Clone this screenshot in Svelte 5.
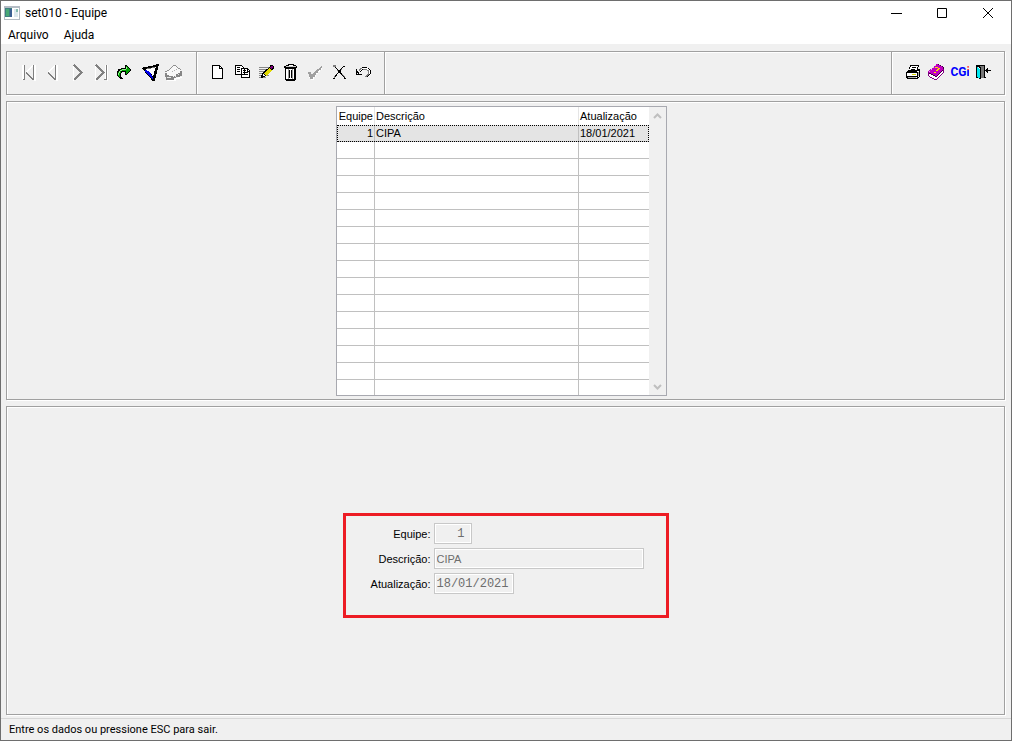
<script>
  const navigation = [
    { id: "first", label: "Primeiro", disabled: true },
    { id: "prev", label: "Anterior", disabled: true },
    { id: "next", label: "Próximo", disabled: true },
    { id: "last", label: "Último", disabled: true },
    { id: "goto", label: "Ir para" },
    { id: "filter", label: "Filtrar" },
    { id: "clear", label: "Limpar filtro", disabled: true },
  ];

  const editing = [
    { id: "new", label: "Novo" },
    { id: "copy", label: "Copiar" },
    { id: "edit", label: "Alterar" },
    { id: "trash", label: "Excluir" },
    { id: "confirm", label: "Confirmar", disabled: true },
    { id: "cancel", label: "Cancelar" },
    { id: "undo", label: "Desfazer" },
  ];

  const system = [
    { id: "print", label: "Imprimir" },
    { id: "help", label: "Ajuda" },
    { id: "cgi", label: "CGi" },
    { id: "exit", label: "Sair" },
  ];

  const rows = [{ equipe: 1, descricao: "CIPA", atualizacao: "18/01/2021" }];
  const blankRows = Array(15);

  let selected = $state(0);
  let current = $derived(rows[selected]);
</script>

{#snippet icon(id)}
  <svg width="24" height="24" viewBox="0 0 24 24" fill="none" shape-rendering="crispEdges" aria-hidden="true">
    {#if id === "first"}
      <path stroke="#fff" stroke-width="2" d="M10 12.5l7-7M18.5 5v16M6.5 5v15" />
      <path stroke="#808080" stroke-width="1.7" d="M10 12.5l7.5 7.5" />
      <path stroke="#808080" d="M8.5 5v15M7 19.5h2M17.5 5v15" />
    {:else if id === "prev"}
      <path stroke="#fff" stroke-width="2" d="M8 12.5l7-7M16.5 5v16" />
      <path stroke="#808080" stroke-width="1.7" d="M8 12.5l7.5 7.5" />
      <path stroke="#808080" d="M15.5 5v15" />
    {:else if id === "next"}
      <path stroke="#fff" d="M9.5 5v16M10.5 20.5l8-8" />
      <path stroke="#808080" stroke-width="1.7" d="M10 5l7.5 7.5-7.5 7.5" />
    {:else if id === "last"}
      <path stroke="#fff" d="M7.5 5v16M8.5 20.5l8-8M17.5 5v15M19.5 5v16" />
      <path stroke="#808080" stroke-width="1.7" d="M8 5l7.5 7.5-7.5 7.5" />
      <path stroke="#808080" d="M18.5 5v15M16 19.5h3" />
    {:else if id === "goto"}
      <path fill="#000" d="M13 5h2v1h1v1h1v1h1v1h1v2h-1v1h-1v1h-1v1h-1v1h-2v-3h-3v1h-1v4h1v1h1v1H8v-1H7v-1H6v-1H5v-5h1v-2h1V9h2V8h4z" />
      <path fill="#00a000" d="M14 6v3H9v1H8v1H7v1H6v4h1v1h1v-4h1v-2h5v3h1v-1h1v-1h1v-1h1V9h-1V8h-1V7h-1V6z" />
      <path fill="#90f090" d="M7 11h1v2H7zM8 10h2v1H8zM10 9h4v1h-4zM14 7h1v2h-1zM6 13h1v2H6z" />
    {:else if id === "filter"}
      <path fill="#000" d="M6 8h1V7h5V6h5V5h3V4h3v2h-1v4h-1v4h-1v4h-1v3h-3v-1h-1v-2h-1v-1h-1v-1h-1v-1h-1v-1h-1v-1h-1v-1H9v-1H8v-1H7v-1H6z" />
      <path fill="#fff" d="M9 9h5V8h5V7h1v1h-1v3h-1v4h-1v-2h-1v-1h-1v-1h-1v-1h-4z" />
      <path fill="#fff" d="M11 9h7v2h-1v5h-1v-2h-1v-1h-1v-1h-1v-1h-2z" />
      <path fill="#0000e8" d="M9 10h2v1h2v1h1v1h1v2h1v2h1v2h-1v-1h-1v-1h-1v-1h-1v-1h-1v-1h-1v-1h-1v-1H9z" />
      <path fill="#777" d="M11 8h4v1h-4zM16 7h3v1h-3z" />
    {:else if id === "clear"}
      <path fill="#f8f8f8" d="M5 13l4-4 5-4 7 5v4l-7 5H6z" />
      <path fill="#fff" d="M7 19h8v-1h3v-1h4v1h-2v1h-4v2H7z" />
      <path fill="#909090" d="M5 11h2v1H5zM7 10h2v1H7zM9 9h1v1H9zM10 8h1v1h-1zM11 7h1v1h-1zM12 6h1v1h-1zM13 5h3v1h-3zM16 6h1v1h-1zM17 7h1v1h-1zM18 8h2v1h-2zM20 9h1v1h-1z" />
      <path fill="#b0b0b0" d="M12 11h1v1h-1zM14 10h1v1h-1zM16 9h1v1h-1z" />
      <path fill="#858585" d="M5 13h2v2h2v1h4v1h1v-1h2v-2h2v-1h2v-2h2v5h-2v1h-4v1h-2v2H6v-3H5z" />
      <path stroke="#e8e8e8" d="M7 17.5h4M15 16.5h1M18 14.5h1" />
    {:else if id === "new"}
      <path fill="#fff" stroke="#000" d="M6.5 5.5h7l3 3v10h-10z" />
      <path stroke="#000" d="M13.5 5.5v3h3M16.5 8v11" />
    {:else if id === "copy"}
      <path fill="#fff" stroke="#000" d="M5.5 5.5h6l3 3v6h-9zM11.5 8.5h6l2 2v7h-8z" />
      <path stroke="#000" d="M7 7.5h3M7 9.5h3M7 11.5h3M13 10.5h3M13 12.5h5M13 14.5h5M17.5 8v3h2" />
    {:else if id === "edit"}
      <path stroke="#888" d="M5 7.5h10M5 9.5h10M5 11.5h8M5 13.5h10M5 15.5h10M5 17.5h7" />
      <path fill="#000" d="M16 5h3v1h1v3h-1v1h-1v1h-1v1h-1v1h-1v1h-1v1h-1v1h-2v1H9v1H7v-3h1v-2h1v-1h1v-1h1v-1h1v-1h1V9h1V8h1V7h1z" />
      <path fill="#e0d800" d="M14 9h1V8h1v1h1v1h1v1h-1v1h-1v1h-1v1h-1v1h-1v1h-1v-1h-1v-1h-1v-1h1v-1h1v-1h1v-1h1z" />
      <path fill="#800080" d="M17 6h2v2h-1v1h-1V8h-1V7h1z" />
      <path fill="#fff" d="M9 14h1v1h1v1H9z" />
    {:else if id === "trash"}
      <path fill="#000" d="M10 4h6v1h2v1h1v2h-1v12h-1v1H8v-1H7V8H6V6h2V5h2z" />
      <path fill="#fff" d="M11 5h4v1h-4zM8 9h9v10H8z" />
      <path fill="#ccc" d="M8 6h10v1H8z" />
      <path stroke="#999" d="M10.5 9v10M14.5 9v10" />
      <path stroke="#000" d="M11.5 10v8M13.5 10v8M16.5 9v11M7 8.5h11" />
    {:else if id === "confirm"}
      <path fill="#fff" d="M7 14h3v1h1v-1h1v-1h2v-2h2V9h2V7h2v3h-2v2h-2v2h-2v3h-2v3H9v-2H7z" />
      <path fill="#a0a0a0" d="M6 12h3v2h2v-1h1v-1h1v-1h1v-1h1V9h2V8h1V7h1V6h1v2h-1v2h-2v1h-1v2h-2v2h-1v2h-2v2H8v-2H7v-3H6z" />
    {:else if id === "cancel"}
      <path stroke="#808080" d="M7 5.5h3M7 6.5h2l3 4M17.5 6.5l-6 7-4 5M15 13.5l4 4" />
      <path stroke="#000" d="M9.5 7.5l9 10 1 1M19.5 5.5l-3 2-5 6-3 4" />
      <path fill="#000" d="M12 11h3v2h-3zM7 18h2v1H7zM18 18h2v1h-2z" />
    {:else if id === "undo"}
      <path stroke="#fff" stroke-width="2" d="M10 12l3-3h4l3 3v2l-3 3" />
      <path stroke="#000" d="M6.5 9v6M6 14.5h6M7 11.5l2 2M9.5 12.5l3-3M12 7.5h5M17.5 8.5h1l2 2v3l-2 2h-1M18 16.5h-3" />
      <path stroke="#808080" d="M9 10.5l2-2h1M13 9.5h4M17.5 10l1 1v3l-2 2h-2" />
    {:else if id === "print"}
      <path fill="#fff" stroke="#000" d="M10.5 5.5h8l-2 6h-8zM6.5 12.5l2-2h9l2-1v7l-2 2h-10l-1-2z" />
      <path fill="#fff" d="M11 6h6l-1 4H9z" />
      <path stroke="#000" d="M12 7.5h4M11 9.5h4M7 12.5h10M17.5 12v6M7 16.5h11M8 18.5h9" />
      <path fill="#fff" d="M7 13h10v3H7z" />
      <path fill="#d8d800" d="M12 14h4v1h-4z" />
      <path stroke="#aaa" d="M8 17.5h8M18.5 12v4" />
    {:else if id === "help"}
      <path fill="#c000c0" d="M12 4h2v1h2v1h2v1h2v2h-1v1h-1v1h-1v1h-1v1h-1v1h-1v1h-1v1h-2v-1H9v-1H7v-1H5v-1H4v-1h1v-1h1v-1h1V9h1V8h1V7h1V6h1V5h1z" />
      <path fill="#fff" d="M5 14h2v1h2v1h2v1h2v-1h1v-1h1v-1h1v-1h1v-1h1v-1h1v-1h1v2l-7 7h-2l-6-3z" />
      <path stroke="#800080" d="M4.5 12v4M5 16.5h1M6 17.5h2M8 18.5h2M10 19.5h3M13 18.5h1M14 17.5h1M15 16.5h1M16 15.5h1M17 14.5h1M18 13.5h1M19 12.5h1M19.5 9v3" />
      <path stroke="#400040" d="M14 4.5h1M16 5.5h1M18 6.5h1M19.5 7v2M18 10.5h1M17 11.5h1M16 12.5h1M15 13.5h1M14 14.5h1M13 15.5h1M11 16.5h2M9 15.5h2M7 14.5h2M5 13.5h2" />
      <path fill="#f0a0f0" d="M5 11h1v1H5zM7 9h1v1H7zM9 7h1v1H9zM11 5h1v1h-1z" />
      <path stroke="#ffe000" d="M11 7.5h3M14 8.5h2M13 9.5h2M12 10.5h2M10 12.5h2" />
    {:else if id === "exit"}
      <path stroke="#000" d="M4 5.5h9M4.5 5v13M4 17.5h3M12.5 5v13M12 17.5h2" />
      <path fill="#777" d="M8 6h4v12H8z" />
      <path fill="#00e8f0" d="M5 7h1v1h1v1h1v9H6v-1H5z" />
      <path stroke="#000" d="M5 6.5h2v1h1v11h-1M14 10.5h5" />
      <path fill="#000" d="M13 10h1V9h1V8h1v5h-1v-1h-1v-1h-1z" />
    {/if}
  </svg>
{/snippet}

{#snippet group(buttons, name)}
  <div class="group {name}" role="group">
    {#each buttons as button (button.id)}
      <button type="button" class="tool" disabled={button.disabled} aria-label={button.label}>
        {#if button.id === "cgi"}
          <span class="cgi">CG<span class="dot">i</span></span>
        {:else}
          {@render icon(button.id)}
        {/if}
      </button>
    {/each}
  </div>
{/snippet}

<div class="window">
  <header class="titlebar">
    <svg width="16" height="14" viewBox="0 0 16 14" shape-rendering="crispEdges" aria-hidden="true">
      <path fill="#b4bcc4" d="M0 0h16v14H0z" />
      <path fill="#fff" d="M1 2h14v11H1z" />
      <path fill="#3e7f80" d="M1 2h7v9H1z" />
      <path fill="#47a875" d="M2 3h3v7H2z" />
      <path fill="#3c5f92" d="M6 3h2v8H6z" />
      <path fill="#dce8ee" d="M10 3h4v8h-4z" />
      <path fill="#86bcb0" d="M12 3h2v3h-2z" />
    </svg>
    <h1>set010 - Equipe</h1>
    <div class="controls">
      <button type="button" aria-label="Minimizar">
        <svg width="12" height="12" viewBox="0 0 12 12"><path stroke="#000" d="M1 6.5h11" /></svg>
      </button>
      <button type="button" aria-label="Maximizar">
        <svg width="12" height="12" viewBox="0 0 12 12"><path fill="none" stroke="#000" d="M1.5 1.5h9v9h-9z" /></svg>
      </button>
      <button type="button" aria-label="Fechar">
        <svg width="12" height="12" viewBox="0 0 12 12"><path stroke="#000" d="M1 1l10 10M11 1L1 11" /></svg>
      </button>
    </div>
  </header>

  <nav class="menu">
    <button type="button">Arquivo</button>
    <button type="button">Ajuda</button>
  </nav>

  <main>
    <div class="toolbar etched" role="toolbar">
      {@render group(navigation, "navigation")}
      {@render group(editing, "editing")}
      {@render group(system, "system")}
    </div>

    <section class="browse etched">
      <div class="grid">
        <div class="viewport">
          <table>
            <colgroup>
              <col class="col-equipe" />
              <col />
              <col class="col-data" />
            </colgroup>
            <thead>
              <tr><th>Equipe</th><th>Descrição</th><th>Atualização</th></tr>
            </thead>
            <tbody>
              {#each rows as row, i}
                <tr class:selected={i === selected} onclick={() => (selected = i)}>
                  <td class="number">{row.equipe}</td>
                  <td>{row.descricao}</td>
                  <td>{row.atualizacao}</td>
                </tr>
              {/each}
              {#each blankRows as _}
                <tr><td></td><td></td><td></td></tr>
              {/each}
            </tbody>
          </table>
        </div>
        <div class="scrollbar">
          <button type="button" disabled aria-label="Rolar para cima">
            <svg width="9" height="6" viewBox="0 0 9 6"><path fill="none" stroke="#bfbfbf" stroke-width="2" d="M1 5l3.5-3.5L8 5" /></svg>
          </button>
          <button type="button" disabled aria-label="Rolar para baixo">
            <svg width="9" height="6" viewBox="0 0 9 6"><path fill="none" stroke="#bfbfbf" stroke-width="2" d="M1 1l3.5 3.5L8 1" /></svg>
          </button>
        </div>
      </div>
    </section>

    <section class="detail etched">
      <form>
        <label for="equipe">Equipe:</label>
        <input id="equipe" class="mono code" value={current.equipe} disabled />
        <label for="descricao">Descrição:</label>
        <input id="descricao" class="text" value={current.descricao} disabled />
        <label for="atualizacao">Atualização:</label>
        <input id="atualizacao" class="mono date" value={current.atualizacao} disabled />
      </form>
    </section>
  </main>

  <footer>Entre os dados ou pressione ESC para sair.</footer>
</div>

<style>
  :global(body) {
    margin: 0;
  }

  .window {
    --face: #f0f0f0;
    --shadow: #a0a0a0;
    --line: #c0c0c0;

    box-sizing: border-box;
    display: flex;
    flex-direction: column;
    min-height: 100vh;
    border: 1px solid #6e6e6e;
    background: var(--face);
    color: #000;
    font: 11px/16px "Liberation Sans", Arial, sans-serif;
  }

  button {
    display: flex;
    align-items: center;
    justify-content: center;
    margin: 0;
    padding: 0;
    border: 0;
    background: none;
    color: inherit;
    font: inherit;
  }

  svg {
    display: block;
  }

  .titlebar {
    display: flex;
    align-items: center;
    height: 24px;
    padding-left: 3px;
    background: #fff;
  }

  h1 {
    margin: 0 auto 0 5px;
    font: 12px/16px Roboto, "Open Sans", sans-serif;
  }

  .controls {
    display: flex;
    align-self: stretch;
  }

  .controls button {
    width: 46px;
  }

  .menu {
    display: flex;
    gap: 15px;
    padding: 2px 0 1px 7px;
    background: #fff;
    font: 12px/16px Roboto, "Open Sans", sans-serif;
  }

  main {
    flex: 1;
    display: flex;
    flex-direction: column;
    gap: 6px;
    padding: 7px 6px 3px 5px;
  }

  .etched {
    border: 1px solid var(--shadow);
    box-shadow: 1px 1px 0 #fff, inset 1px 1px 0 #fff;
  }

  .toolbar {
    display: flex;
  }

  .group {
    display: flex;
    padding: 8px 10px 10px 9px;
    border-right: 1px solid var(--shadow);
    box-shadow: 1px 0 0 #fff;
  }

  .navigation {
    padding-right: 12px;
  }

  .system {
    margin-left: auto;
    padding-inline: 8px;
    border-right: 0;
    border-left: 1px solid var(--shadow);
    box-shadow: inset 1px 0 0 #fff;
  }

  .tool {
    width: 24px;
    height: 24px;
  }

  .cgi {
    color: #00f;
    font: bold 12px/24px Roboto, "Liberation Sans", sans-serif;
  }

  .dot {
    background: linear-gradient(#f33 35%, #00f 35%);
    background-clip: text;
    color: transparent;
  }

  .browse {
    display: flex;
    justify-content: center;
    padding: 4px 8px 3px 0;
  }

  .grid {
    display: flex;
    height: 288px;
    border: 1px solid #a8a9b0;
    background: #fff;
  }

  .viewport {
    overflow: hidden;
  }

  table {
    width: 312px;
    table-layout: fixed;
    border-collapse: separate;
    border-spacing: 0;
  }

  .col-equipe {
    width: 38px;
  }

  .col-data {
    width: 70px;
  }

  th,
  td {
    box-sizing: border-box;
    height: 17px;
    padding: 0 1px;
    border-right: 1px solid var(--line);
    border-bottom: 1px solid var(--line);
    font-weight: normal;
    text-align: left;
    white-space: nowrap;
  }

  th {
    height: 18px;
    border-right-color: #e5e5e5;
    border-bottom: 0;
  }

  th:last-child,
  td:last-child {
    border-right: 0;
  }

  th:first-child,
  .number {
    text-align: right;
  }

  .selected {
    background: #e4e4e4;
    outline: 1px dotted #000;
    outline-offset: -1px;
  }

  .scrollbar {
    display: flex;
    flex-direction: column;
    justify-content: space-between;
    width: 17px;
    background: var(--face);
  }

  .scrollbar button {
    height: 17px;
  }

  .detail {
    flex: 1;
    display: flex;
    align-items: center;
    justify-content: center;
  }

  form {
    box-sizing: border-box;
    display: grid;
    grid-template-columns: 85px 1fr;
    align-items: center;
    gap: 4px 3px;
    width: 326px;
    padding: 7px 0 21px;
    border: 3px solid #ed1c24;
    margin-top: 10px;
  }

  label {
    text-align: right;
  }

  input {
    box-sizing: border-box;
    height: 21px;
    padding: 0 2px;
    border: 1px solid #c8c8c8;
    border-radius: 0;
    box-shadow: inset 0 0 0 1px #fff;
    background: var(--face);
    color: #6d6d6d;
    font: inherit;
  }

  .mono {
    font: 12px/16px "Liberation Mono", "Courier New", monospace;
  }

  .code {
    width: 38px;
    padding-right: 6px;
    text-align: right;
  }

  .text {
    width: 210px;
  }

  .date {
    width: 80px;
  }

  footer {
    padding: 3px 8px 2px;
    border-top: 1px solid #d7d7d7;
    font-family: Roboto, "Liberation Sans", sans-serif;
  }
</style>
